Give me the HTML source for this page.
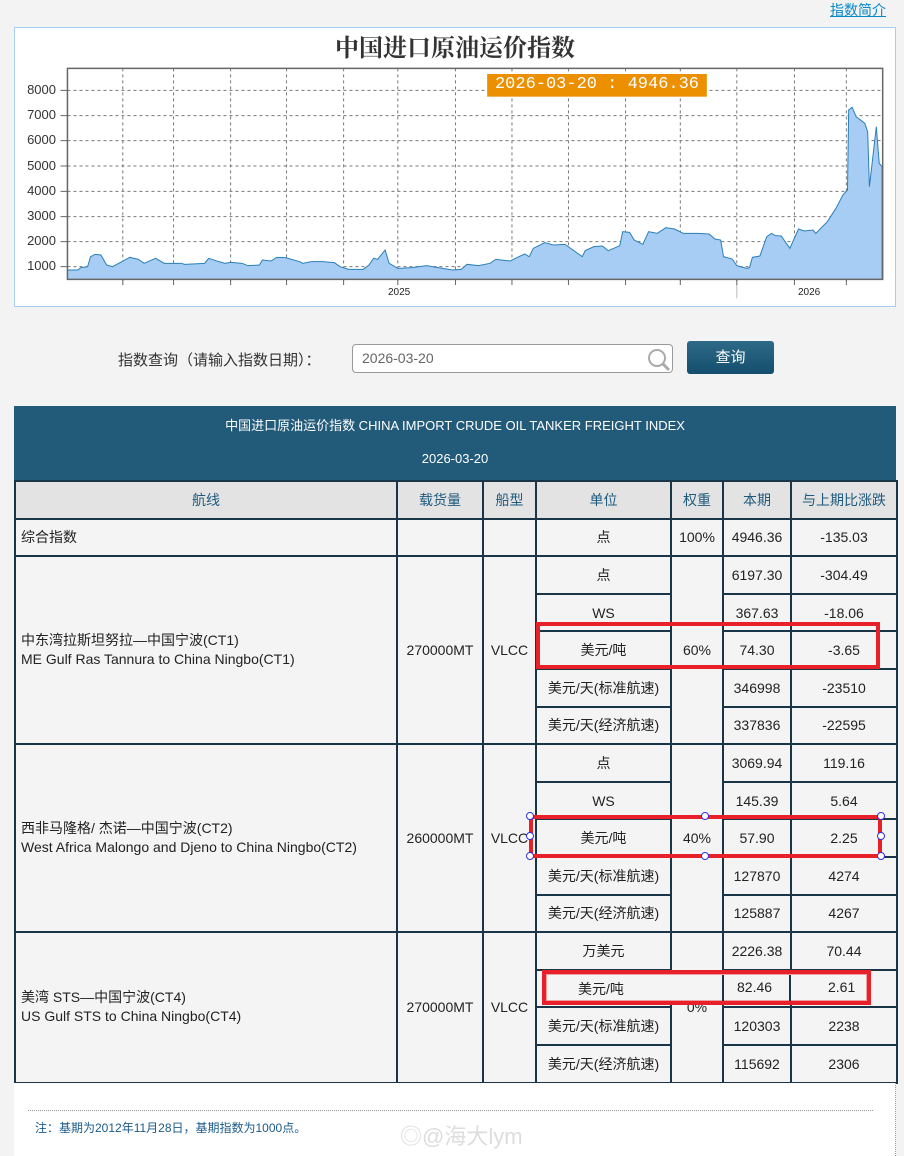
<!DOCTYPE html>
<html><head><meta charset="utf-8"><style>
body{margin:0;background:#f3f3f3;font-family:"Liberation Sans","Noto Sans CJK SC",sans-serif;width:904px;height:1156px;position:relative;overflow:hidden}
.a{position:absolute}
.yl{position:absolute;right:848px;font-size:13px;color:#333;line-height:14px}
table{position:absolute;left:14px;top:480px;width:882px;border-collapse:collapse;table-layout:fixed;font-size:14px;color:#222}
tr{height:37.6px}
td,th{border:2px solid #1b3548;background:#f4f4f4;text-align:center;padding:0}
th{background:#e3e3e3;color:#1e5a7d;font-weight:normal}
td.l{text-align:left;padding-left:5px;line-height:19px}
.rb{position:absolute;border:4px solid #e8202a;box-sizing:border-box}
.h{position:absolute;width:8px;height:8px;border:1.5px solid #3030e0;background:#fff;border-radius:50%;box-sizing:border-box}
</style></head><body>
<div class="a" style="left:830px;top:0;font-size:14px;color:#0a88c8;text-decoration:underline">指数简介</div>
<div class="a" style="left:14px;top:27px;width:880px;height:278px;background:#fff;border:1px solid #a8cdee"></div>
<svg class="a" style="left:0;top:0" width="904" height="310" viewBox="0 0 1568 930" preserveAspectRatio="none">
<g stroke="#777" stroke-dasharray="3,3" fill="none">
<path vector-effect="non-scaling-stroke" d="M213 205V855M301 205V855M400 205V855M497 205V855M596 205V855M690 205V855M790 205V855M888 205V855M986 205V855M1085 205V855M1180 205V855M1278 205V855M1378 205V855M1468 205V855M117 271H1531M117 347H1531M117 422H1531M117 498H1531M117 574H1531M117 650H1531M117 725H1531M117 800H1531"/>
</g>
<path vector-effect="non-scaling-stroke" fill="#a7cdf4" stroke="#2a7fb8" stroke-width="1" d="M117 838L117 810L135 810L140 803L152 800L157 770L165 763L175 765L185 795L195 800L225 772L240 778L250 790L270 775L285 790L315 790L320 793L355 790L362 775L380 785L390 790L400 787L420 790L430 797L450 795L455 780L470 783L480 772L495 773L520 785L525 790L540 785L560 785L580 788L590 800L605 808L630 808L640 795L648 775L655 778L668 750L675 790L690 805L715 803L740 797L760 803L785 810L800 808L810 793L830 797L850 790L860 778L885 783L900 770L910 762L918 770L925 745L945 728L960 735L980 733L1010 770L1015 752L1030 740L1045 738L1055 752L1075 737L1080 695L1092 697L1100 720L1115 733L1125 695L1140 700L1155 683L1170 687L1185 700L1210 700L1230 702L1240 717L1250 720L1255 770L1270 777L1278 797L1295 805L1300 803L1305 772L1318 768L1330 710L1338 700L1345 707L1355 708L1370 745L1385 687L1395 693L1410 690L1415 700L1435 665L1450 625L1462 585L1470 570L1472 330L1478 322L1485 350L1500 370L1505 395L1508 560L1520 380L1525 490L1530 500L1530 838Z"/>
<rect x="117" y="205" width="1414" height="633" fill="none" stroke="#666" stroke-width="1.5" vector-effect="non-scaling-stroke"/>
<path vector-effect="non-scaling-stroke" stroke="#666" d="M105 271H117M105 347H117M105 422H117M105 498H117M105 574H117M105 650H117M105 725H117M105 800H117M213 838V855M301 838V855M400 838V855M497 838V855M596 838V855M690 838V855M790 838V855M888 838V855M986 838V855M1085 838V855M1180 838V855M1278 838V855M1378 838V855M1468 838V855"/>
<path vector-effect="non-scaling-stroke" stroke="#bbb" d="M1278 855V895"/>
<rect x="845" y="222" width="381" height="68" fill="#ec8f00"/>
</svg>
<div class="a" style="left:0;width:910px;top:28px;text-align:center;font-size:24px;font-weight:bold;color:#333;font-family:'Liberation Serif','Noto Serif CJK SC',serif">中国进口原油运价指数</div>
<div class="a" style="left:487px;top:75px;width:220px;text-align:center;color:#fff;font-size:17px;font-family:'Liberation Mono',monospace">2026-03-20 : 4946.36</div>
<div class="yl" style="top:83px">8000</div><div class="yl" style="top:108px">7000</div><div class="yl" style="top:133px">6000</div><div class="yl" style="top:159px">5000</div><div class="yl" style="top:184px">4000</div><div class="yl" style="top:209px">3000</div><div class="yl" style="top:234px">2000</div><div class="yl" style="top:259px">1000</div>
<div class="a" style="left:388px;top:287px;font-size:10px;color:#222">2025</div>
<div class="a" style="left:798px;top:287px;font-size:10px;color:#222">2026</div>
<div class="a" style="left:118px;top:349px;font-size:15px;color:#333">指数查询（请输入指数日期）：</div>
<div class="a" style="left:352px;top:344px;width:319px;height:27px;background:#fff;border:1px solid #999;border-radius:4px"></div>
<div class="a" style="left:362px;top:350px;font-size:14px;color:#666">2026-03-20</div>
<svg class="a" style="left:645px;top:345px" width="28" height="28"><circle cx="12" cy="13" r="8" fill="none" stroke="#aaa" stroke-width="2"/><path d="M18 19L24 25" stroke="#aaa" stroke-width="3"/></svg>
<div class="a" style="left:687px;top:341px;width:87px;height:33px;border-radius:3px;background:linear-gradient(#2e6a88,#144e6e);color:#fff;font-size:15px;text-align:center;line-height:33px">查询</div>
<div class="a" style="left:14px;top:406px;width:882px;height:74px;background:#225a7a;color:#fff;font-size:13px;text-align:center">
<div style="position:absolute;top:9px;width:100%">中国进口原油运价指数 CHINA IMPORT CRUDE OIL TANKER FREIGHT INDEX</div>
<div style="position:absolute;top:45px;width:100%">2026-03-20</div></div>
<table>
<colgroup><col style="width:382px"><col style="width:86px"><col style="width:53px"><col style="width:135px"><col style="width:52px"><col style="width:68px"><col style="width:106px"></colgroup>
<tr><th>航线</th><th>载货量</th><th>船型</th><th>单位</th><th>权重</th><th>本期</th><th>与上期比涨跌</th></tr>
<tr><td class="l">综合指数</td><td></td><td></td><td>点</td><td>100%</td><td>4946.36</td><td>-135.03</td></tr>
<tr><td class="l" rowspan="5">中东湾拉斯坦努拉—中国宁波(CT1)<br>ME Gulf Ras Tannura to China Ningbo(CT1)</td><td rowspan="5">270000MT</td><td rowspan="5">VLCC</td><td>点</td><td rowspan="5">60%</td><td>6197.30</td><td>-304.49</td></tr>
<tr><td>WS</td><td>367.63</td><td>-18.06</td></tr>
<tr><td>美元/吨</td><td>74.30</td><td>-3.65</td></tr>
<tr><td>美元/天(标准航速)</td><td>346998</td><td>-23510</td></tr>
<tr><td>美元/天(经济航速)</td><td>337836</td><td>-22595</td></tr>
<tr><td class="l" rowspan="5">西非马隆格/ 杰诺—中国宁波(CT2)<br>West Africa Malongo and Djeno to China Ningbo(CT2)</td><td rowspan="5">260000MT</td><td rowspan="5">VLCC</td><td>点</td><td rowspan="5">40%</td><td>3069.94</td><td>119.16</td></tr>
<tr><td>WS</td><td>145.39</td><td>5.64</td></tr>
<tr><td>美元/吨</td><td>57.90</td><td>2.25</td></tr>
<tr><td>美元/天(标准航速)</td><td>127870</td><td>4274</td></tr>
<tr><td>美元/天(经济航速)</td><td>125887</td><td>4267</td></tr>
<tr><td class="l" rowspan="4">美湾 STS—中国宁波(CT4)<br>US Gulf STS to China Ningbo(CT4)</td><td rowspan="4">270000MT</td><td rowspan="4">VLCC</td><td>万美元</td><td rowspan="4">0%</td><td>2226.38</td><td>70.44</td></tr>
<tr><td>美元/吨</td><td>82.46</td><td>2.61</td></tr>
<tr><td>美元/天(标准航速)</td><td>120303</td><td>2238</td></tr>
<tr><td>美元/天(经济航速)</td><td>115692</td><td>2306</td></tr>
</table>
<div class="rb" style="left:536px;top:622px;width:344px;height:47px"></div>
<div class="rb" style="left:529px;top:815px;width:353px;height:43px"></div>
<div class="h" style="left:526px;top:812px"></div><div class="h" style="left:701px;top:812px"></div><div class="h" style="left:877px;top:812px"></div>
<div class="h" style="left:526px;top:832px"></div><div class="h" style="left:877px;top:832px"></div>
<div class="h" style="left:526px;top:852px"></div><div class="h" style="left:701px;top:852px"></div><div class="h" style="left:877px;top:852px"></div>
<div class="rb" style="left:542px;top:970px;width:329px;height:35px;background:#f4f4f4;box-shadow:inset 0 0 0 1px #f0a0a0"></div>
<div class="a" style="left:578px;top:979px;font-size:14px;color:#222">美元/吨</div>
<div class="a" style="left:737px;top:979px;font-size:14px;color:#222">82.46</div>
<div class="a" style="left:828px;top:979px;font-size:14px;color:#222">2.61</div>
<div class="a" style="left:722px;top:975px;width:2px;height:26px;background:#1b3548"></div>
<div class="a" style="left:789px;top:975px;width:2px;height:26px;background:#1b3548"></div>
<div class="a" style="left:14px;top:1083px;width:881px;height:73px;background:#fff;border-right:1px dotted #999"></div>
<div class="a" style="left:28px;top:1110px;width:845px;border-top:1px dotted #999"></div>
<div class="a" style="left:35px;top:1119px;font-size:12px;color:#1a5a8a">注：基期为2012年11月28日，基期指数为1000点。</div>
<div class="a" style="left:400px;top:1119px;font-size:22px;color:#ddd">◎@海大lym</div>
</body></html>
